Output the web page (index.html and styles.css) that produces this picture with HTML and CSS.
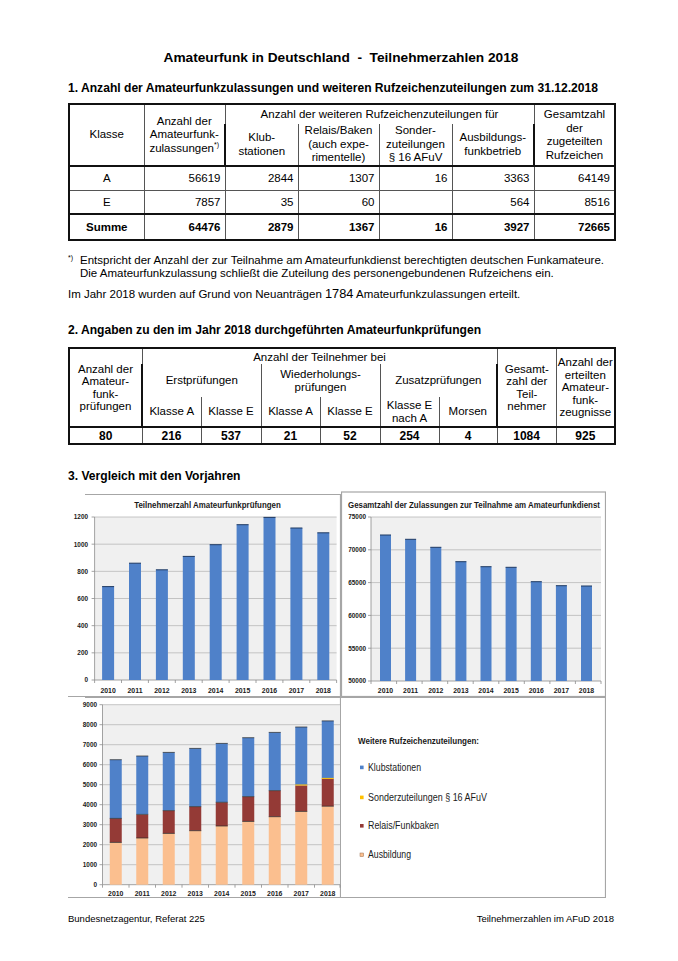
FILE: index.html
```html
<!DOCTYPE html>
<html lang="de">
<head>
<meta charset="utf-8">
<title>Amateurfunk in Deutschland - Teilnehmerzahlen 2018</title>
<link rel="stylesheet" href="styles.css">
</head>
<body>
<div class="page">
  <h1 class="title">Amateurfunk in Deutschland  -  Teilnehmerzahlen 2018</h1>

  <h2 class="sec sec1">1. Anzahl der Amateurfunkzulassungen und weiteren Rufzeichenzuteilungen zum 31.12.2018</h2>
  <table class="t1">
    <colgroup>
      <col class="w75"><col class="w81"><col class="w73"><col class="w81"><col class="w73"><col class="w82"><col class="w81">
    </colgroup>
    <thead>
      <tr class="h1r">
        <th rowspan="2" class="hb">Klasse</th>
        <th rowspan="2" class="hb">Anzahl der<br>Amateurfunk-<br>zulassungen<sup class="fn">*)</sup></th>
        <th colspan="4" class="span">Anzahl der weiteren Rufzeichenzuteilungen für</th>
        <th rowspan="2" class="hb">Gesamtzahl<br>der<br>zugeteilten<br>Rufzeichen</th>
      </tr>
      <tr class="h2r">
        <th class="hb sub">Klub-<br>stationen</th>
        <th class="hb sub">Relais/Baken<br>(auch expe-<br>rimentelle)</th>
        <th class="hb sub">Sonder-<br>zuteilungen<br>§ 16 AFuV</th>
        <th class="hb sub">Ausbildungs-<br>funkbetrieb</th>
      </tr>
    </thead>
    <tbody>
      <tr class="row ra"><td class="k">A</td><td>56619</td><td>2844</td><td>1307</td><td>16</td><td>3363</td><td>64149</td></tr>
      <tr class="row"><td class="k">E</td><td>7857</td><td>35</td><td>60</td><td></td><td>564</td><td>8516</td></tr>
      <tr class="sum"><td class="k">Summe</td><td>64476</td><td>2879</td><td>1367</td><td>16</td><td>3927</td><td>72665</td></tr>
    </tbody>
  </table>

  <div class="note">
    <span class="star">*)</span>
    <p>Entspricht der Anzahl der zur Teilnahme am Amateurfunkdienst berechtigten deutschen Funkamateure.<br>Die Amateurfunkzulassung schließt die Zuteilung des personengebundenen Rufzeichens ein.</p>
  </div>
  <p class="year">Im Jahr 2018 wurden auf Grund von Neuanträgen <span class="big">1784</span> Amateurfunkzulassungen erteilt.</p>

  <h2 class="sec sec2">2. Angaben zu den im Jahr 2018 durchgeführten Amateurfunkprüfungen</h2>
  <table class="t2">
    <colgroup>
      <col class="w73"><col class="w59"><col class="w60"><col class="w59"><col class="w60"><col class="w59"><col class="w58"><col class="w59"><col class="w59">
    </colgroup>
    <thead>
      <tr class="g1">
        <th rowspan="3" class="hb">Anzahl der<br>Amateur-<br>funk-<br>prüfungen</th>
        <th colspan="6" class="span">Anzahl der Teilnehmer bei</th>
        <th rowspan="3" class="hb">Gesamt-<br>zahl der<br>Teil-<br>nehmer</th>
        <th rowspan="3" class="hb">Anzahl der<br>erteilten<br>Amateur-<br>funk-<br>zeugnisse</th>
      </tr>
      <tr class="g2">
        <th colspan="2" class="grp">Erstprüfungen</th>
        <th colspan="2" class="grp">Wiederholungs-<br>prüfungen</th>
        <th colspan="2" class="grp">Zusatzprüfungen</th>
      </tr>
      <tr class="g3">
        <th class="hb sub">Klasse A</th>
        <th class="hb sub">Klasse E</th>
        <th class="hb sub">Klasse A</th>
        <th class="hb sub">Klasse E</th>
        <th class="hb sub">Klasse E<br>nach A</th>
        <th class="hb sub">Morsen</th>
      </tr>
    </thead>
    <tbody>
      <tr class="data"><td>80</td><td>216</td><td>537</td><td>21</td><td>52</td><td>254</td><td>4</td><td>1084</td><td>925</td></tr>
    </tbody>
  </table>

  <h2 class="sec sec3">3. Vergleich mit den Vorjahren</h2>

  <div class="charts">
    <!-- Chart 1 -->
    <div class="panel">
      <svg width="273" height="207" viewBox="0 0 273 207">
        <path class="frame" d="M17 4.5H272.5V206.5H0"/>
        <text class="ctitle" text-anchor="middle" transform="translate(139.5 18) scale(0.92 1)">Teilnehmerzahl Amateurfunkprüfungen</text>
        <rect class="plotbg" x="26.6" y="27" width="242" height="163"/>
        <path class="grid" d="M26.6 27H268.6M26.6 54.17H268.6M26.6 81.33H268.6M26.6 108.5H268.6M26.6 135.67H268.6M26.6 162.83H268.6"/>
        <path class="axis" d="M26.6 27V190H268.6M23.6 27H26.6M23.6 54.17H26.6M23.6 81.33H26.6M23.6 108.5H26.6M23.6 135.67H26.6M23.6 162.83H26.6M23.6 190H26.6M26.6 190V193M53.5 190V193M80.4 190V193M107.3 190V193M134.2 190V193M161.1 190V193M188 190V193M214.9 190V193M241.8 190V193M268.6 190V193"/>
        <g class="ylab">
          <text x="20" y="29.3">1200</text>
          <text x="20" y="56.5">1000</text>
          <text x="20" y="83.6">800</text>
          <text x="20" y="110.8">600</text>
          <text x="20" y="138">400</text>
          <text x="20" y="165.1">200</text>
          <text x="20" y="192.3">0</text>
        </g>
        <g class="bar">
          <rect x="34.1" y="96.6" width="12" height="93.4"/>
          <rect x="61" y="73.2" width="12" height="116.8"/>
          <rect x="87.9" y="79.8" width="12" height="110.2"/>
          <rect x="114.8" y="66.4" width="12" height="123.6"/>
          <rect x="141.7" y="54.7" width="12" height="135.3"/>
          <rect x="168.6" y="34.7" width="12" height="155.3"/>
          <rect x="195.5" y="27.4" width="12" height="162.6"/>
          <rect x="222.4" y="38" width="12" height="152"/>
          <rect x="249.3" y="42.8" width="12" height="147.2"/>
        </g>
        <path class="bartop" d="M34.1 96.6h12M61 73.2h12M87.9 79.8h12M114.8 66.4h12M141.7 54.7h12M168.6 34.7h12M195.5 27.4h12M222.4 38h12M249.3 42.8h12"/>
        <g class="xlab">
          <text x="40.1" y="202.5">2010</text>
          <text x="67" y="202.5">2011</text>
          <text x="93.9" y="202.5">2012</text>
          <text x="120.8" y="202.5">2013</text>
          <text x="147.7" y="202.5">2014</text>
          <text x="174.6" y="202.5">2015</text>
          <text x="201.5" y="202.5">2016</text>
          <text x="228.4" y="202.5">2017</text>
          <text x="255.3" y="202.5">2018</text>
        </g>
      </svg>
    </div>

    <!-- Chart 2 -->
    <div class="panel">
      <svg width="265" height="207" viewBox="0 0 265 207">
        <rect class="frame" x="0.5" y="2" width="264" height="204.5"/>
        <text class="ctitle" text-anchor="middle" transform="translate(133 17.5) scale(0.92 1)">Gesamtzahl der Zulassungen zur Teilnahme am Amateurfunkdienst</text>
        <rect class="plotbg" x="30" y="27" width="230" height="164"/>
        <path class="grid" d="M30 27H260M30 59.8H260M30 92.6H260M30 125.4H260M30 158.2H260"/>
        <path class="axis" d="M30 27V191H260M27 27H30M27 59.8H30M27 92.6H30M27 125.4H30M27 158.2H30M27 191H30M30 191V194M55.6 191V194M81.1 191V194M106.7 191V194M132.2 191V194M157.8 191V194M183.3 191V194M208.9 191V194M234.4 191V194M260 191V194"/>
        <g class="ylab">
          <text x="25" y="29.3">75000</text>
          <text x="25" y="62.1">70000</text>
          <text x="25" y="94.9">65000</text>
          <text x="25" y="127.7">60000</text>
          <text x="25" y="160.5">55000</text>
          <text x="25" y="193.3">50000</text>
        </g>
        <g class="bar">
          <rect x="39" y="45" width="11" height="146"/>
          <rect x="64.1" y="49.3" width="11" height="141.7"/>
          <rect x="89.3" y="57.3" width="11" height="133.7"/>
          <rect x="114.4" y="71.7" width="11" height="119.3"/>
          <rect x="139.5" y="76.7" width="11" height="114.3"/>
          <rect x="164.6" y="77.3" width="11" height="113.7"/>
          <rect x="189.8" y="91.7" width="11" height="99.3"/>
          <rect x="214.9" y="95.7" width="11" height="95.3"/>
          <rect x="240" y="96" width="11" height="95"/>
        </g>
        <path class="bartop" d="M39 45h11M64.1 49.3h11M89.3 57.3h11M114.4 71.7h11M139.5 76.7h11M164.6 77.3h11M189.8 91.7h11M214.9 95.7h11M240 96h11"/>
        <g class="xlab">
          <text x="44.5" y="202.5">2010</text>
          <text x="69.6" y="202.5">2011</text>
          <text x="94.8" y="202.5">2012</text>
          <text x="119.9" y="202.5">2013</text>
          <text x="145" y="202.5">2014</text>
          <text x="170.1" y="202.5">2015</text>
          <text x="195.3" y="202.5">2016</text>
          <text x="220.4" y="202.5">2017</text>
          <text x="245.5" y="202.5">2018</text>
        </g>
      </svg>
    </div>

    <!-- Chart 3 -->
    <div class="panel">
      <svg width="273" height="201" viewBox="0 0 273 201">
        <path class="frame" d="M17 0.5H272.5V200.5H0"/>
        <rect class="plotbg" x="34.5" y="7.7" width="237.5" height="180"/>
        <path class="grid" d="M34.5 7.7H272M34.5 27.7H272M34.5 47.7H272M34.5 67.7H272M34.5 87.7H272M34.5 107.7H272M34.5 127.7H272M34.5 147.7H272M34.5 167.7H272"/>
        <path class="axis" d="M34.5 7.7V187.7H272M31.5 7.7H34.5M31.5 27.7H34.5M31.5 47.7H34.5M31.5 67.7H34.5M31.5 87.7H34.5M31.5 107.7H34.5M31.5 127.7H34.5M31.5 147.7H34.5M31.5 167.7H34.5M31.5 187.7H34.5M34.5 187.7V190.7M61 187.7V190.7M87.5 187.7V190.7M114 187.7V190.7M140.5 187.7V190.7M167 187.7V190.7M193.5 187.7V190.7M220 187.7V190.7M246.5 187.7V190.7M272 187.7V190.7"/>
        <g class="ylab">
          <text x="29" y="10">9000</text>
          <text x="29" y="30">8000</text>
          <text x="29" y="50">7000</text>
          <text x="29" y="70">6000</text>
          <text x="29" y="90">5000</text>
          <text x="29" y="110">4000</text>
          <text x="29" y="130">3000</text>
          <text x="29" y="150">2000</text>
          <text x="29" y="170">1000</text>
          <text x="29" y="190">0</text>
        </g>
        <g class="seg-a">
          <rect x="41.75" y="145.4" width="12" height="42.3"/>
          <rect x="68.25" y="141" width="12" height="46.7"/>
          <rect x="94.75" y="136.4" width="12" height="51.3"/>
          <rect x="121.25" y="133.7" width="12" height="54"/>
          <rect x="147.75" y="129" width="12" height="58.7"/>
          <rect x="174.25" y="124.4" width="12" height="63.3"/>
          <rect x="200.75" y="119.7" width="12" height="68"/>
          <rect x="227.25" y="114.4" width="12" height="73.3"/>
          <rect x="253.75" y="109.2" width="12" height="78.5"/>
        </g>
        <g class="seg-r">
          <rect x="41.75" y="121.4" width="12" height="24"/>
          <rect x="68.25" y="117.7" width="12" height="23.3"/>
          <rect x="94.75" y="113.7" width="12" height="22.7"/>
          <rect x="121.25" y="109.7" width="12" height="24"/>
          <rect x="147.75" y="105.4" width="12" height="23.6"/>
          <rect x="174.25" y="99.7" width="12" height="24.7"/>
          <rect x="200.75" y="93.7" width="12" height="26"/>
          <rect x="227.25" y="88.4" width="12" height="26"/>
          <rect x="253.75" y="81.8" width="12" height="27.4"/>
        </g>
        <g class="seg-k">
          <rect x="41.75" y="62.7" width="12" height="58.7"/>
          <rect x="68.25" y="59" width="12" height="58.3"/>
          <rect x="94.75" y="55.4" width="12" height="58.1"/>
          <rect x="121.25" y="51.4" width="12" height="58.2"/>
          <rect x="147.75" y="46.4" width="12" height="58.8"/>
          <rect x="174.25" y="40.7" width="12" height="58.8"/>
          <rect x="200.75" y="35.4" width="12" height="58.1"/>
          <rect x="227.25" y="30" width="12" height="57.9"/>
          <rect x="253.75" y="23.9" width="12" height="57.6"/>
        </g>
        <path class="segline" d="M41.75 145.4h12M68.25 141h12M94.75 136.4h12M121.25 133.7h12M147.75 129h12M174.25 124.4h12M200.75 119.7h12M227.25 114.4h12M253.75 109.2h12M41.75 121.4h12M68.25 117.4h12M94.75 113.6h12M121.25 109.6h12M147.75 105.3h12M174.25 99.6h12M200.75 93.6h12M41.75 62.7h12M68.25 59h12M94.75 55.4h12M121.25 51.4h12M147.75 46.4h12M174.25 40.7h12M200.75 35.4h12M227.25 30h12M253.75 23.9h12"/>
        <path class="segson" d="M227.25 88h12M253.75 81.4h12"/>
        <g class="xlab">
          <text x="47.75" y="198.5">2010</text>
          <text x="74.25" y="198.5">2011</text>
          <text x="100.75" y="198.5">2012</text>
          <text x="127.25" y="198.5">2013</text>
          <text x="153.75" y="198.5">2014</text>
          <text x="180.25" y="198.5">2015</text>
          <text x="206.75" y="198.5">2016</text>
          <text x="233.25" y="198.5">2017</text>
          <text x="259.75" y="198.5">2018</text>
        </g>
      </svg>
    </div>

    <!-- Legend -->
    <div class="panel">
      <svg width="265" height="201" viewBox="0 0 265 201">
        <path class="frame" d="M0 0.5H264.5V200.5H0"/>
        <text class="lgt" x="17" y="46.8" textLength="121" lengthAdjust="spacingAndGlyphs">Weitere Rufzeichenzuteilungen:</text>
        <rect class="mk-k" x="19" y="68.6" width="3.6" height="3.6"/>
        <text class="lgi" x="27" y="74" textLength="53" lengthAdjust="spacingAndGlyphs">Klubstationen</text>
        <rect class="mk-s" x="19" y="98.6" width="3.6" height="3.6"/>
        <text class="lgi" x="27" y="104" textLength="119" lengthAdjust="spacingAndGlyphs">Sonderzuteilungen § 16 AFuV</text>
        <rect class="mk-r" x="19" y="127" width="3.6" height="3.6"/>
        <text class="lgi" x="27" y="132.4" textLength="71" lengthAdjust="spacingAndGlyphs">Relais/Funkbaken</text>
        <rect class="mk-a" x="19" y="156" width="3.6" height="3.6"/>
        <text class="lgi" x="27" y="161.4" textLength="43" lengthAdjust="spacingAndGlyphs">Ausbildung</text>
      </svg>
    </div>
  </div>

  <footer class="foot">
    <span>Bundesnetzagentur, Referat 225</span>
    <span>Teilnehmerzahlen im AFuD 2018</span>
  </footer>
</div>
</body>
</html>
```
FILE: styles.css
```css
* { box-sizing: border-box; }

html, body {
  margin: 0;
  padding: 0;
  background: #ffffff;
}

body {
  font-family: "Liberation Sans", Arial, sans-serif;
  color: #000;
}

.page {
  width: 678px;
  height: 961px;
  padding: 50px 64px 0 68px;
  overflow: hidden;
}

.title {
  margin: 0;
  font-size: 13.7px;
  font-weight: bold;
  line-height: 16px;
  text-align: center;
  white-space: pre;
}

.sec {
  margin: 0;
  font-size: 12.1px;
  font-weight: bold;
  line-height: 14px;
  white-space: nowrap;
}
.sec1 { margin-top: 15px; }
.sec2 { margin-top: 22px; }
.sec3 { margin-top: 24px; }

/* ---------- tables ---------- */
table {
  border-collapse: collapse;
  table-layout: fixed;
  width: 546px;
  font-size: 11.5px;
  border: 2px solid #111;
}
th, td {
  padding: 0;
  font-weight: normal;
  text-align: center;
  vertical-align: middle;
  border-left: 1px solid #555;
  border-right: 1px solid #555;
}
th:first-child, td:first-child { border-left: 2px solid #111; }
th:last-child, td:last-child { border-right: 2px solid #111; }

.w58 { width: 58px; }
.w59 { width: 59px; }
.w60 { width: 60px; }
.w73 { width: 73px; }
.w75 { width: 75px; }
.w81 { width: 81px; }
.w82 { width: 82px; }

.fn {
  font-size: 7px;
  vertical-align: 5px;
  line-height: 0;
}

/* table 1 */
.t1 { margin-top: 8px; }
.t1 th { line-height: 13.5px; }
.t1 .h1r { height: 20px; }
.t1 .h2r { height: 42px; }
.t1 .span { border-bottom: none; vertical-align: top; padding-top: 3px; }
.t1 .sub { border-top: none; }
.t1 .hb { border-bottom: 2px solid #111; }
.t1 .h1r th:last-child { border-right: 2px solid #111; }
.t1 td {
  text-align: right;
  padding-right: 4px;
  line-height: 14px;
}
.t1 td.k { text-align: center; padding-right: 0; }
.t1 .row { height: 24px; }
.t1 .ra td { border-bottom: 1px solid #555; }
.t1 .sum { height: 26px; }
.t1 .sum td {
  font-weight: bold;
  border-top: 2px solid #111;
}

/* footnote */
.note {
  display: flex;
  margin-top: 13px;
  font-size: 11.5px;
  line-height: 13px;
}
.note .star {
  width: 12px;
  flex: none;
  font-size: 7px;
  line-height: 8px;
}
.note p { margin: 0; }

.year {
  margin: 7px 0 0;
  font-size: 11.5px;
  line-height: 13px;
}
.year .big { font-size: 12.8px; }

/* table 2 */
.t2 { margin-top: 10px; }
.t2 th { line-height: 12.5px; }
.t2 .g1 { height: 16px; }
.t2 .g2 { height: 33px; }
.t2 .g3 { height: 30px; }
.t2 .span { border-bottom: none; vertical-align: top; padding-top: 2px; }
.t2 .grp { border-top: none; border-bottom: none; }
.t2 .sub { border-top: none; }
.t2 .hb { border-bottom: 2px solid #111; }
.t2 .g1 th:last-child { border-right: 2px solid #111; }
.t2 .data { height: 17px; }
.t2 .data td {
  font-weight: bold;
  font-size: 12px;
  line-height: 14px;
}

/* ---------- charts ---------- */
.charts {
  margin-top: 7px;
  display: grid;
  grid-template-columns: 273px 265px;
  grid-template-rows: 207px 201px;
}
.panel svg { display: block; }

.frame {
  fill: none;
  stroke: #a6a6a6;
  stroke-width: 1.2;
}
.plotbg { fill: #f0f0f0; }
.grid {
  fill: none;
  stroke: #b8b8b8;
  stroke-width: 0.8;
}
.axis {
  fill: none;
  stroke: #8c8c8c;
  stroke-width: 0.8;
}
.ctitle {
  font-family: "Liberation Sans", Arial, sans-serif;
  font-weight: bold;
  font-size: 8.6px;
  fill: #1a1a1a;
}
.ylab text {
  font-family: "Liberation Sans", Arial, sans-serif;
  font-weight: bold;
  font-size: 6.4px;
  fill: #1a1a1a;
  text-anchor: end;
}
.xlab text {
  font-family: "Liberation Sans", Arial, sans-serif;
  font-weight: bold;
  font-size: 6.9px;
  fill: #1a1a1a;
  text-anchor: middle;
}
.bar rect { fill: #4f81c9; }
.bartop {
  fill: none;
  stroke: #1f3a63;
  stroke-width: 1;
}
.seg-a rect { fill: #fbbf8f; }
.seg-r rect { fill: #943a36; }
.seg-k rect { fill: #4f81c9; }
.segline {
  fill: none;
  stroke: #2a2a2a;
  stroke-width: 0.7;
}
.segson {
  fill: none;
  stroke: #ffc000;
  stroke-width: 1;
}

.lgt {
  font-family: "Liberation Sans", Arial, sans-serif;
  font-weight: bold;
  font-size: 8.6px;
  fill: #1a1a1a;
}
.lgi {
  font-family: "Liberation Sans", Arial, sans-serif;
  font-size: 10.8px;
  fill: #1a1a1a;
}
.mk-k { fill: #4f81c9; }
.mk-s { fill: #ffc000; }
.mk-r { fill: #943a36; }
.mk-a { fill: #fbbf8f; stroke: #9a7050; stroke-width: 0.5; }

/* ---------- footer ---------- */
.foot {
  margin-top: 15px;
  width: 546px;
  display: flex;
  justify-content: space-between;
  font-size: 9.5px;
  line-height: 12px;
}
```
